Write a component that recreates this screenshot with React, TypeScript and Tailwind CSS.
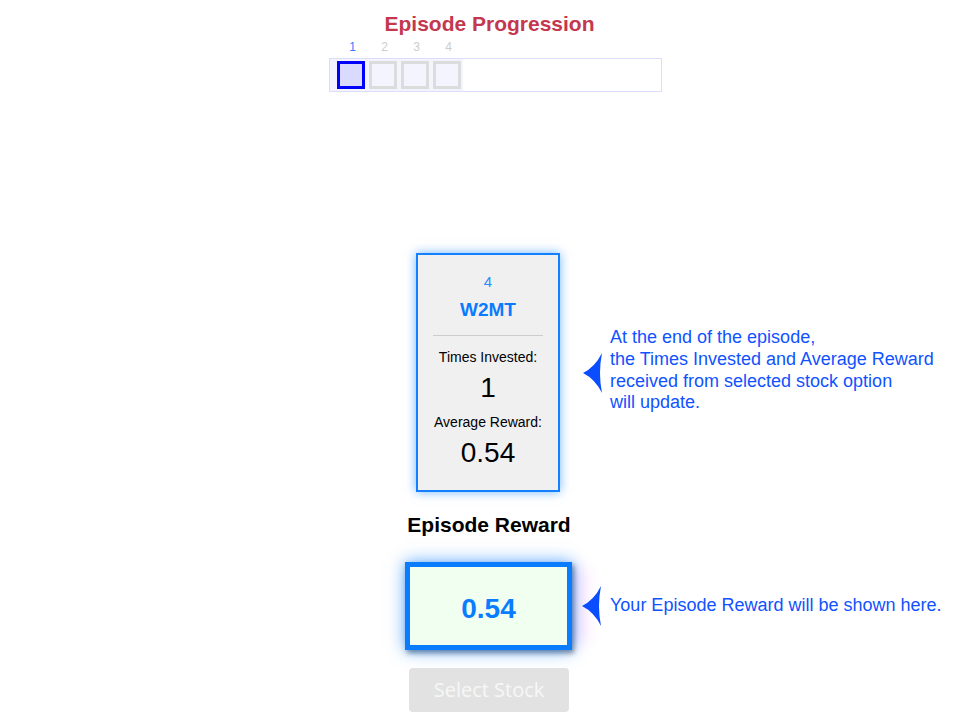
import React from "react";

function Arrow() {
  return (
    <svg width="20" height="40" viewBox="0 0 20 40" className="shrink-0">
      <path d="M19 0 Q12 14 0 20 Q12 26 19 40 Q15 20 19 0 Z" fill="#0a4dff" />
    </svg>
  );
}

export default function App() {
  const nums = [1, 2, 3, 4];
  return (
    <div
      className="w-[974px] min-h-[723px] bg-white pl-[3px] flex flex-col items-center pt-[12px]"
      style={{ fontFamily: '"Liberation Sans", Arial, sans-serif' }}
    >
      <div className="text-[21px] leading-[24px] font-bold text-[#c4384f] ml-[2px]">Episode Progression</div>

      <div className="ml-[13px] w-[333px] flex flex-col">
        <div className="mt-[4px] pl-[10px] flex gap-[4px] text-[12px] leading-[14px]">
          {nums.map((n) => (
            <div key={n} className={"w-[28px] text-center " + (n === 1 ? "text-[#2a80ff]" : "text-[#cccccc]")}>
              {n}
            </div>
          ))}
        </div>
        <div className="mt-[4px] h-[34px] border border-[#dcdcff] flex">
          <div className="h-full bg-[#f4f4ff] pl-[7px] pr-[2px] py-[2px] flex gap-[4px]">
            <div className="w-[28px] h-[28px] border-[3px] border-[#0000ff] bg-[#dadaff]" />
            <div className="w-[28px] h-[28px] border-[3px] border-[#dcdcdc] bg-[#f4f4ff]" />
            <div className="w-[28px] h-[28px] border-[3px] border-[#dcdcdc] bg-[#f4f4ff]" />
            <div className="w-[28px] h-[28px] border-[3px] border-[#dcdcdc] bg-[#f4f4ff]" />
          </div>
          <div className="flex-1 bg-white" />
        </div>
      </div>

      <div className="mt-[161px] w-full grid grid-cols-[413px_144px_1fr] items-center">
        <div />
        <div className="w-[144px] h-[239px] border-2 border-[#1280ff] bg-[#f0f0f0] shadow-[0_0_10px_rgba(0,123,255,0.55)] flex flex-col items-center pt-[17px]">
          <div className="text-[15px] leading-[20px] text-[#2b8cff]">4</div>
          <div className="mt-[6px] text-[19px] leading-[24px] font-bold text-[#0a7bff]">W2MT</div>
          <div className="mt-[13px] w-[110px] h-px bg-[#cccccc]" />
          <div className="mt-[12px] text-[14px] leading-[18px] text-black">Times Invested:</div>
          <div className="mt-[6px] text-[28px] leading-[32px] text-black">1</div>
          <div className="mt-[9px] text-[14px] leading-[18px] text-black">Average Reward:</div>
          <div className="mt-[6px] text-[28px] leading-[32px] text-black">0.54</div>
        </div>
        <div className="pl-[23px] flex items-center gap-[7px]">
          <Arrow />
          <div className="text-[18px] leading-[21.6px] text-[#1052ff] mt-[-4px]">
            <div>At the end of the episode,</div>
            <div>the Times Invested and Average Reward</div>
            <div>received from selected stock option</div>
            <div>will update.</div>
          </div>
        </div>
      </div>

      <div className="mt-[21px] text-[21px] leading-[24px] font-bold text-black ml-[1px]">Episode Reward</div>

      <div className="mt-[25px] w-full grid grid-cols-[402px_167px_1fr] items-center">
        <div />
        <div className="w-[167px] h-[88px] border-[5px] border-[#0a7cff] bg-[#f0fff0] flex items-center justify-center pt-[5px] shadow-[0_0_16px_rgba(0,123,255,0.65),2px_3px_5px_rgba(0,0,0,0.45),22px_0_14px_-6px_rgba(255,0,255,0.08)]">
          <span className="text-[28px] leading-[32px] font-bold text-[#0a7cff]">0.54</span>
        </div>
        <div className="pl-[10px] flex items-center gap-[8px]">
          <Arrow />
          <div className="text-[18px] leading-[21.6px] text-[#1052ff]">Your Episode Reward will be shown here.</div>
        </div>
      </div>

      <div
        className="mt-[18px] w-[160px] h-[44px] rounded-[4px] bg-[#e2e2e2] flex items-center justify-center text-[20px] text-[#f7f7f7] ml-[1px]"
        style={{ fontFamily: '"Open Sans", "Liberation Sans", sans-serif' }}
      >
        Select Stock
      </div>
    </div>
  );
}
